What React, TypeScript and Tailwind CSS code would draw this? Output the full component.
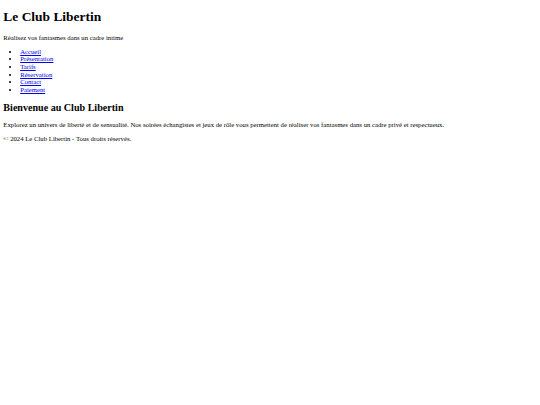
import React from "react";

const links = ["Accueil", "Présentation", "Tarifs", "Réservation", "Contact", "Paiement"];

const App: React.FC = () => {
    return (
        <div className="min-h-screen bg-white px-[3.36px] pb-[3.36px] pt-px text-[6.72px] text-black font-['Liberation_Serif',_'Times_New_Roman',_serif] leading-[normal]">
            <header>
                <h1 className="text-[13.44px] font-bold mt-[8px] mb-[9px]">Le Club Libertin</h1>
                <p className="my-[6.72px]">Réalisez vos fantasmes dans un cadre intime</p>
            </header>
            <nav>
                <ul className="list-disc pl-[16.8px] my-[6.72px]">
                    {links.map(link => (
                        <li key={link} className="leading-[7.6px]">
                            <a href="#" className="text-[#0000ee] underline">{link}</a>
                        </li>
                    ))}
                </ul>
            </nav>
            <main>
                <section>
                    <h2 className="text-[10.08px] font-bold my-[8.37px]">Bienvenue au Club Libertin</h2>
                    <p className="my-[6.72px]">
                        Explorez un univers de liberté et de sensualité. Nos soirées échangistes et jeux de rôle vous permettent de réaliser vos fantasmes dans un cadre privé et respectueux.
                    </p>
                </section>
            </main>
            <footer>
                <p className="my-[6.72px]">© 2024 Le Club Libertin - Tous droits réservés.</p>
            </footer>
        </div>
    );
};

export default App;
